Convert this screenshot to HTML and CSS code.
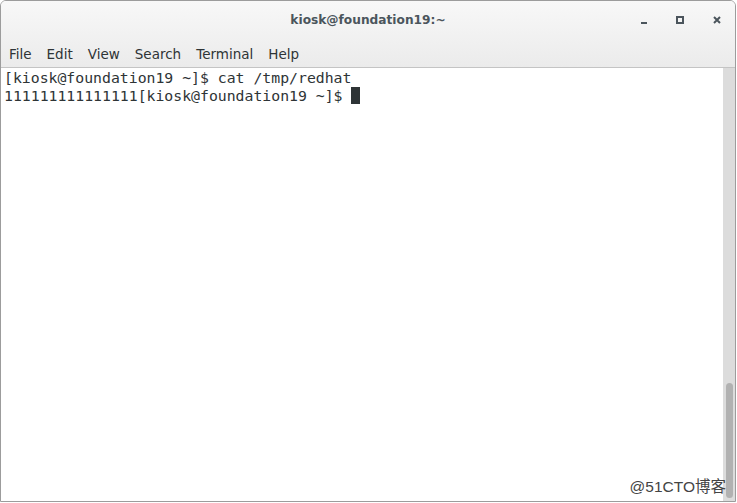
FILE: index.html
```html
<!DOCTYPE html>
<html lang="en">
<head>
    <meta charset="UTF-8">
    <title>kiosk@foundation19:~</title>
    <link rel="stylesheet" href="styles.css">
</head>
<body>
    <div class="window">
        <div class="header">
            <div class="titlebar">
                <span class="title">kiosk@foundation19:~</span>
                <div class="controls">
                    <span class="ctl ctl-min"></span>
                    <span class="ctl ctl-max"></span>
                    <svg class="ctl-close" width="8" height="8" viewBox="0 0 8 8">
                        <path d="M1 1 L7 7 M7 1 L1 7" stroke="#4b555c" stroke-width="2"/>
                    </svg>
                </div>
            </div>
            <nav class="menubar">
                <span>File</span>
                <span>Edit</span>
                <span>View</span>
                <span>Search</span>
                <span>Terminal</span>
                <span>Help</span>
            </nav>
        </div>
        <div class="body">
            <pre class="term">[kiosk@foundation19 ~]$ cat /tmp/redhat
111111111111111[kiosk@foundation19 ~]$ <span class="cursor"> </span></pre>
            <div class="scrollbar">
                <div class="thumb"></div>
            </div>
        </div>
        <div class="watermark">@51CTO博客</div>
    </div>
</body>
</html>
```

FILE: styles.css
```css
body {
    margin: 0;
    background: #fff;
}

.window {
    position: relative;
    width: 734px;
    height: 500px;
    border: 1px solid #9c9c9c;
    border-radius: 6px 6px 0 0;
    display: flex;
    flex-direction: column;
    overflow: hidden;
}

.header {
    background: linear-gradient(#f8f8f8, #ebebeb);
    border-bottom: 1px solid #c4c4c4;
}

.titlebar {
    height: 39px;
    position: relative;
    display: flex;
    align-items: center;
    justify-content: center;
}

.title {
    font-family: "DejaVu Sans", sans-serif;
    font-weight: bold;
    font-size: 12.2px;
    color: #4b555c;
    margin-top: -1px;
}

.controls {
    position: absolute;
    right: 14px;
    top: 14px;
    display: flex;
    align-items: flex-start;
    gap: 29px;
}

.ctl-min {
    width: 6px;
    height: 2px;
    background: #4b555c;
    margin-top: 7px;
}

.ctl-max {
    width: 4px;
    height: 4px;
    border: 2px solid #4b555c;
    margin-top: 1px;
}

.ctl-close {
    display: block;
    margin-top: 1px;
}

.menubar {
    height: 27px;
    display: flex;
    align-items: center;
    padding-left: 8px;
    font-family: "DejaVu Sans", sans-serif;
    font-size: 13.5px;
    color: #2e3436;
}

.menubar span {
    margin-right: 15px;
}

.body {
    flex: 1;
    display: flex;
    background: #fff;
    min-height: 0;
}

.term {
    flex: 1;
    margin: 0;
    padding: 1px 0 0 3px;
    font-family: "DejaVu Sans Mono", monospace;
    font-size: 14.8px;
    line-height: 18px;
    color: #2e3436;
}

.cursor {
    display: inline-block;
    width: 9px;
    height: 17px;
    background: #2e3436;
    vertical-align: top;
}

.scrollbar {
    width: 12px;
    background: #dcdcdc;
    display: flex;
    flex-direction: column;
    justify-content: flex-end;
    padding: 0 2px 3px 3px;
    box-sizing: border-box;
}

.thumb {
    height: 115px;
    border-radius: 4px;
    background: #b1b1b1;
}

.watermark {
    position: absolute;
    right: 9px;
    bottom: 5px;
    font-family: "Liberation Sans", "Noto Sans CJK SC", sans-serif;
    font-size: 15.5px;
    color: #444;
}
```
